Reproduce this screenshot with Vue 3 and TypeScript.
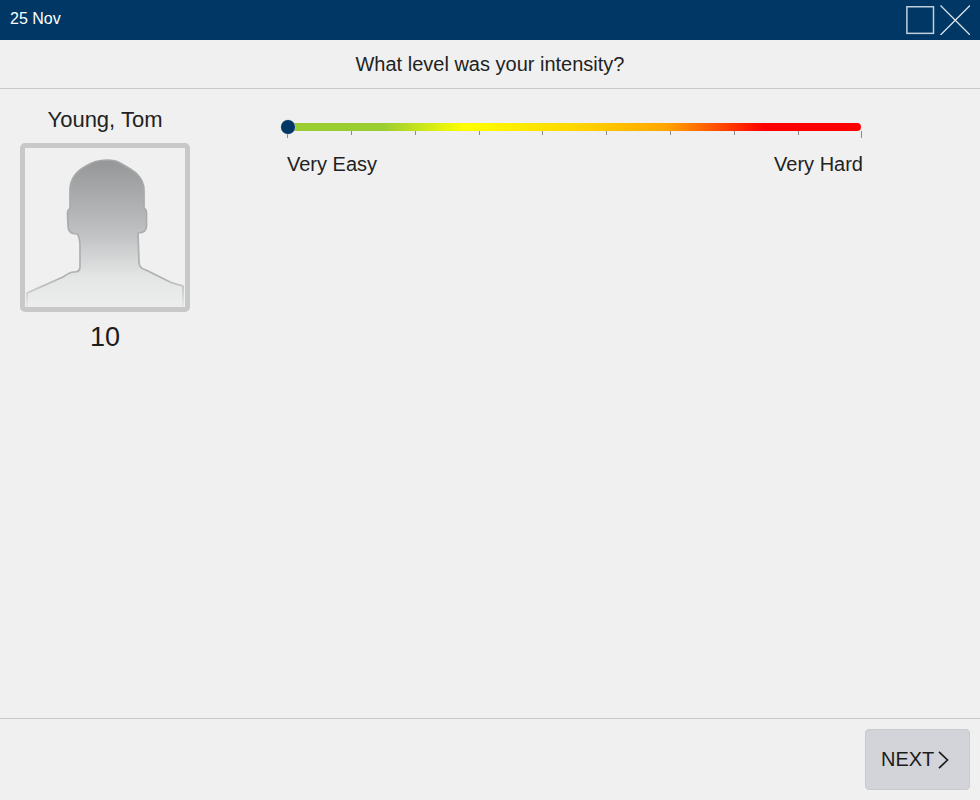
<script setup lang="ts">
const ticks: number[] = Array.from({ length: 10 }, (_, i) => i)
const outline =
  'M27 307 L27 293 C38 288 50 283 63 277 C67 274 70 272 74 272 C78 272 80 271 80 267 L80 247 C80 240 79 236 77 234 C71 234 68 231 68 226 L67.500 214 C67.500 211 68 209 70 209 L70 190 C70 178 78 170 86 166 C92 162 99 160 107 160 C113 160 117 161 120 163 C127 167 133 170 137 174 C142 179 144 184 144 190 L144 208 C146 209 146.500 211 146.500 213 L146.500 226 C146.500 231 143 233 138 233 L139 262 C139 267 142 269 146 270 C154 274 162 278 170 282 C175 284 179 285 183 286 L183 307'
</script>

<template>
  <div class="window">
    <header class="titlebar">
      <span class="date">25 Nov</span>
      <div class="controls">
        <svg class="ctl" width="30" height="30" viewBox="0 0 30 30" aria-hidden="true">
          <rect x="0.900" y="1.750" width="26.600" height="26.600" fill="none" stroke="#c3d0dc" stroke-width="1.500" />
        </svg>
        <svg class="ctl" width="30" height="30" viewBox="0 0 30 30" aria-hidden="true">
          <path d="M0.500 0.500 L30 30 M30 0.500 L0.500 30" fill="none" stroke="#dbe3ea" stroke-width="1.300" />
        </svg>
      </div>
    </header>

    <div class="question">What level was your intensity?</div>

    <main class="content">
      <section class="player">
        <div class="name">Young, Tom</div>
        <div class="photo">
          <svg width="160" height="159" viewBox="25 148 160 159" aria-hidden="true">
            <defs>
              <linearGradient id="sil" x1="0" y1="0" x2="0" y2="1">
                <stop offset="0" stop-color="#959697" />
                <stop offset="0.5" stop-color="#c0c1c2" />
                <stop offset="0.8" stop-color="#e4e5e5" />
                <stop offset="1" stop-color="#eceded" />
              </linearGradient>
              <linearGradient id="edge" x1="0" y1="0" x2="0" y2="1">
                <stop offset="0" stop-color="#a5a6a7" />
                <stop offset="0.8" stop-color="#b0b1b2" />
                <stop offset="1" stop-color="#e6e7e7" />
              </linearGradient>
            </defs>
            <path :d="outline + ' Z'" fill="url(#sil)" />
            <path :d="outline" fill="none" stroke="url(#edge)" stroke-width="1.700" stroke-linejoin="round" />
          </svg>
        </div>
        <div class="number">10</div>
      </section>

      <section class="scale">
        <div class="track">
          <div class="bar"></div>
          <div class="ticks">
            <span v-for="t in ticks" :key="t" class="tick"></span>
          </div>
          <div class="thumb"></div>
        </div>
        <div class="labels">
          <span>Very Easy</span>
          <span>Very Hard</span>
        </div>
      </section>
    </main>

    <footer class="footer">
      <button class="next" type="button">
        <span>NEXT</span>
        <svg width="11" height="18" viewBox="0 0 11 18" aria-hidden="true">
          <path d="M1 0.800 L9.500 9 L1 17.200" fill="none" stroke="#1c1c1c" stroke-width="1.700" />
        </svg>
      </button>
    </footer>
  </div>
</template>

<style>
html,
body {
  margin: 0;
  background: #f0f0f0;
}
</style>

<style scoped>
.window {
  width: 980px;
  height: 800px;
  display: flex;
  flex-direction: column;
  background: #f0f0f0;
  color: #222;
  font-family: "Liberation Sans", Arial, sans-serif;
  overflow: hidden;
}
.titlebar {
  height: 40px;
  flex: none;
  box-sizing: border-box;
  padding: 0 10px;
  display: flex;
  align-items: center;
  justify-content: space-between;
  background: #003764;
  color: #fff;
}
.date {
  font-size: 16px;
  line-height: 18px;
  margin-top: -3px;
}
.controls {
  display: flex;
  gap: 4px;
}
.ctl {
  display: block;
}
.question {
  height: 49px;
  flex: none;
  box-sizing: border-box;
  border-bottom: 1px solid #c8c8c8;
  padding-top: 1px;
  display: flex;
  align-items: center;
  justify-content: center;
  font-size: 20px;
}
.content {
  flex: 1;
  min-height: 0;
  display: flex;
  align-items: flex-start;
}
.player {
  width: 170px;
  margin-left: 20px;
  padding-top: 19px;
  display: flex;
  flex-direction: column;
  align-items: center;
}
.name {
  font-size: 22px;
  line-height: 24px;
  margin-bottom: 11px;
}
.photo {
  box-sizing: border-box;
  width: 170px;
  height: 169px;
  border: 5px solid #c8c8c8;
  border-radius: 5px;
}
.photo svg {
  display: block;
}
.number {
  font-size: 27px;
  line-height: 32px;
  margin-top: 9px;
  color: #1c1c1c;
}
.scale {
  width: 575px;
  margin-left: 97px;
  padding-top: 34px;
}
.track {
  position: relative;
  height: 15px;
}
.bar {
  height: 8px;
  margin-right: 1px;
  border-radius: 0 4px 4px 0;
  background: linear-gradient(
    to right,
    #9acd32 16.6%,
    #ffff00 31%,
    #ffd700 50%,
    #ffa500 66%,
    #ff0000 83%
  );
}
.ticks {
  display: flex;
  justify-content: space-between;
  margin: 0 -0.400px 0 0.400px;
}
.tick {
  width: 1px;
  height: 4px;
  background: #8a8a8a;
}
.tick:first-child,
.tick:last-child {
  height: 7px;
}
.thumb {
  position: absolute;
  left: -6.500px;
  top: -3px;
  width: 14px;
  height: 14px;
  border-radius: 50%;
  background: #003764;
  box-shadow: 0 0 0 0.500px #b9c6d2;
}
.labels {
  display: flex;
  justify-content: space-between;
  margin-top: 14px;
  margin-right: -1px;
  font-size: 20px;
  line-height: 24px;
}
.footer {
  height: 82px;
  flex: none;
  box-sizing: border-box;
  border-top: 1px solid #c8c8c8;
  padding: 10px 10px 10px 0;
  display: flex;
  justify-content: flex-end;
}
.next {
  width: 105px;
  height: 61px;
  box-sizing: border-box;
  border: 1px solid #c9cacd;
  border-radius: 4px;
  background: #d3d4d9;
  color: #1c1c1c;
  font-family: inherit;
  font-size: 20px;
  display: flex;
  align-items: center;
  justify-content: flex-start;
  gap: 4px;
  padding: 0 0 0 15px;
}
</style>
